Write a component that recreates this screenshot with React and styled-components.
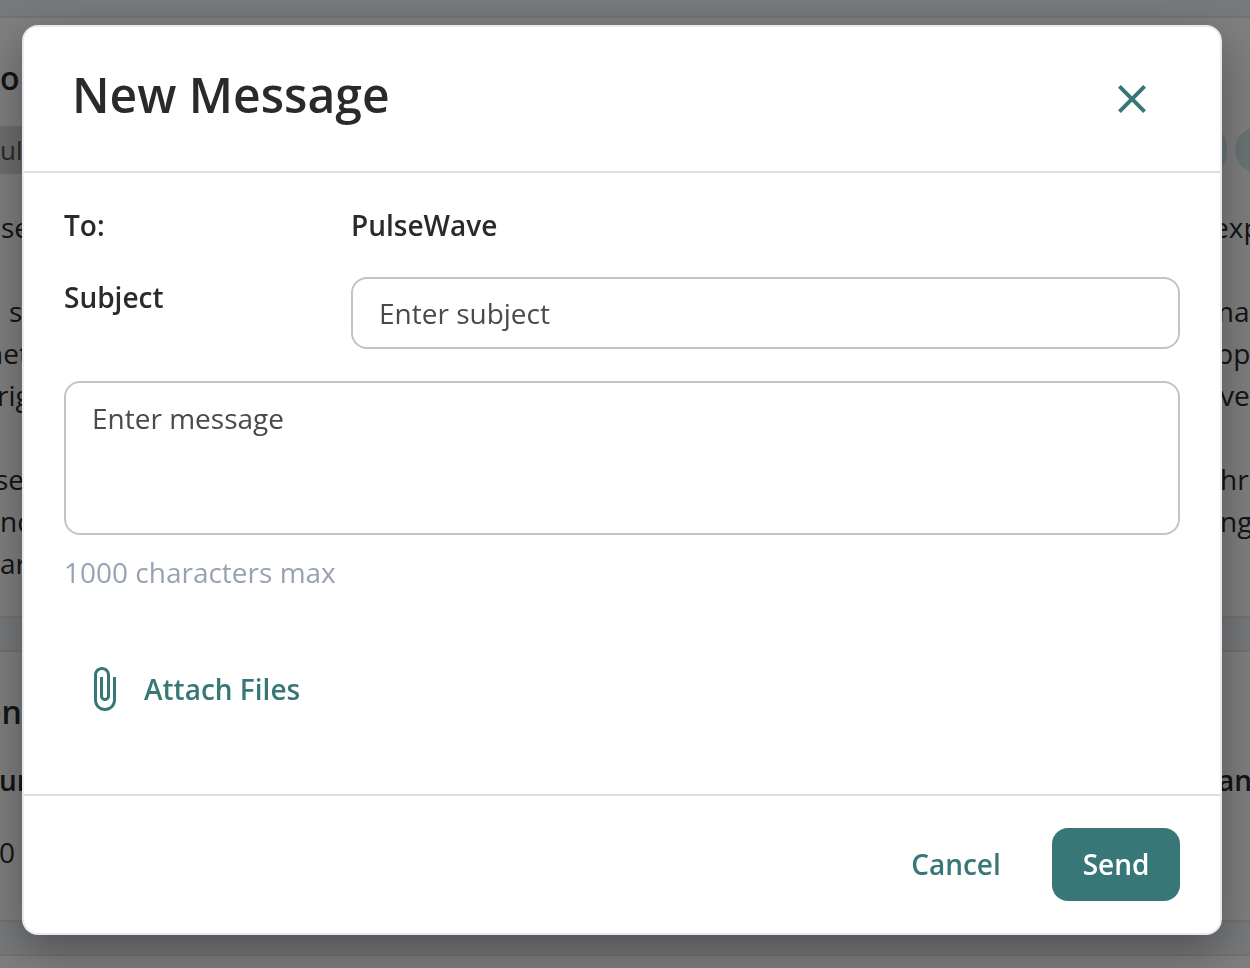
import styled, { createGlobalStyle } from 'styled-components';

const GlobalStyle = createGlobalStyle`
  * {
    box-sizing: border-box;
  }
  body {
    margin: 0;
    overflow: hidden;
    font-family: 'Open Sans', 'Noto Sans', sans-serif;
    font-size: 28px;
    color: #2a2a2a;
  }
`;

const Page = styled.div`
  width: 1250px;
  height: 968px;
  padding-top: 16px;
  overflow: hidden;
  background: #eff2f5;
`;

const Card = styled.section`
  height: ${(props) => props.$height}px;
  margin-bottom: ${(props) => props.$gap || 0}px;
  padding-top: ${(props) => props.$top || 0}px;
  border-top: 2px solid #e4e6e9;
  border-bottom: 2px solid #e4e6e9;
  background: #fff;
`;

const Row = styled.div`
  display: flex;
  justify-content: space-between;
  height: ${(props) => props.$height}px;
  margin-bottom: ${(props) => props.$gap || 0}px;
  line-height: ${(props) => props.$height}px;
  font-size: ${(props) => props.$size || 28}px;
  font-weight: ${(props) => props.$weight || 400};
  white-space: nowrap;
`;

const Cell = styled.span`
  width: 40px;
  text-indent: ${(props) => props.$shift || 0}px;
`;

const Tag = styled(Cell)`
  background: #dcdcdc;
  color: #555;
  font-size: 26px;
`;

const Pills = styled.div`
  display: flex;
  gap: 8px;
  width: 62px;
  padding-top: 1px;
`;

const Pill = styled.i`
  flex: none;
  width: ${(props) => props.$width}px;
  height: 46px;
  border-radius: 23px;
  background: #d6e9eb;
`;

const Overlay = styled.div`
  position: fixed;
  inset: 0;
  display: flex;
  align-items: flex-start;
  padding: 25px 28px 0 22px;
  background: rgba(0, 0, 0, 0.5);
`;

const Modal = styled.div`
  display: flex;
  flex-direction: column;
  width: 1200px;
  height: 910px;
  border: 2px solid #e9eaf0;
  border-radius: 16px;
  background: #fff;
  box-shadow: 0 16px 48px rgba(0, 0, 0, 0.35);
`;

const Header = styled.header`
  display: flex;
  justify-content: space-between;
  height: 146px;
  padding: 35px 64px 0 48px;
  border-bottom: 2px solid #dedede;
`;

const Title = styled.h1`
  margin: 0;
  font-size: 48px;
  font-weight: 600;
  line-height: 66px;
`;

const IconButton = styled.button`
  width: 48px;
  height: 48px;
  margin-top: 13px;
  padding: 0;
  border: 0;
  background: none;
  color: #387778;
`;

const Body = styled.div`
  flex: 1;
  padding: 31px 40px 0;
`;

const Field = styled.div`
  display: grid;
  grid-template-columns: 287px 1fr;
  margin-bottom: ${(props) => props.$gap}px;
  font-weight: 600;
  line-height: 42px;
`;

const Input = styled.input`
  height: 72px;
  margin-top: 1px;
  padding: 0 26px;
  border: 2px solid #c4c4c4;
  border-radius: 16px;
  outline: none;
  font: 400 28px 'Open Sans', sans-serif;

  &::placeholder {
    color: #4a4a4a;
  }
`;

const Textarea = styled.textarea`
  display: block;
  width: 100%;
  height: 154px;
  padding: 14px 26px;
  border: 2px solid #c4c4c4;
  border-radius: 16px;
  outline: none;
  resize: none;
  font: 400 28px/42px 'Open Sans', sans-serif;

  &::placeholder {
    color: #4a4a4a;
  }
`;

const Hint = styled.p`
  margin: 16px 0 0;
  color: #98a2b3;
  line-height: 42px;
`;

const Attach = styled.button`
  display: flex;
  align-items: center;
  gap: 16px;
  margin: 72px 0 0 16px;
  padding: 0;
  border: 0;
  background: none;
  color: #387778;
  font: 600 28px/48px 'Open Sans', sans-serif;
`;

const Footer = styled.footer`
  display: flex;
  justify-content: flex-end;
  align-items: flex-start;
  gap: 20px;
  height: 139px;
  padding: 32px 40px 0;
  border-top: 2px solid #dedede;
`;

const Button = styled.button`
  height: 73px;
  width: ${(props) => (props.$primary ? 128 : 152)}px;
  padding: 0 0 1px;
  border: 0;
  border-radius: 16px;
  background: ${(props) => (props.$primary ? '#387778' : 'transparent')};
  color: ${(props) => (props.$primary ? '#fff' : '#387778')};
  font: 600 28px 'Open Sans', sans-serif;
`;

const lines = [
  ['se', 1, 'exp', 3],
  [],
  ['s', 9, 'ma', -2],
  ['net', -14, 'pp', 6],
  ['rig', -3, 've', 10],
  [],
  ['se', -5, 'thr', 0],
  ['nd', 0, 'ng', 10],
  ['ar', 0],
];

function CloseIcon() {
  return (
    <svg width="48" height="48" viewBox="0 0 24 24" fill="currentColor">
      <path d="M19 6.41L17.59 5 12 10.59 6.41 5 5 6.41 10.59 12 5 17.59 6.41 19 12 13.41 17.59 19 19 17.59 13.41 12z" />
    </svg>
  );
}

function ClipIcon() {
  return (
    <svg width="48" height="48" viewBox="0 0 24 24" fill="currentColor">
      <path d="M16.5 6v11.5c0 2.21-1.79 4-4 4s-4-1.79-4-4V5c0-1.38 1.12-2.5 2.5-2.5s2.5 1.12 2.5 2.5v10.5c0 .55-.45 1-1 1s-1-.45-1-1V6H10v9.5c0 1.38 1.12 2.5 2.5 2.5s2.5-1.12 2.5-2.5V5c0-2.21-1.79-4-4-4S7 2.79 7 5v12.5c0 3.04 2.46 5.5 5.5 5.5s5.5-2.46 5.5-5.5V6h-1.5z" />
    </svg>
  );
}

function Background() {
  return (
    <Page>
      <Card $height={602} $gap={32} $top={36}>
        <Row $height={48} $gap={24} $size={32} $weight={600}>
          <Cell>o</Cell>
        </Row>
        <Row $height={48} $gap={32}>
          <Tag>ul</Tag>
          <Pills>
            <Pill $width={39} />
            <Pill $width={120} />
          </Pills>
        </Row>
        {lines.map(([left, leftShift, right, rightShift], i) => (
          <Row key={i} $height={42}>
            <Cell $shift={leftShift}>{left}</Cell>
            <Cell $shift={rightShift}>{right}</Cell>
          </Row>
        ))}
      </Card>
      <Card $height={272} $gap={32} $top={36}>
        <Row $height={48} $gap={23} $size={32} $weight={600}>
          <Cell $shift={-17}>en</Cell>
        </Row>
        <Row $height={42} $gap={30} $weight={600}>
          <Cell $shift={-1}>ur</Cell>
          <Cell $shift={8}>an</Cell>
        </Row>
        <Row $height={42}>
          <Cell $shift={-1}>0</Cell>
        </Row>
      </Card>
      <Card $height={100} />
    </Page>
  );
}

export default function App() {
  return (
    <>
      <GlobalStyle />
      <Background />
      <Overlay>
        <Modal role="dialog" aria-label="New Message">
          <Header>
            <Title>New Message</Title>
            <IconButton aria-label="Close">
              <CloseIcon />
            </IconButton>
          </Header>
          <Body>
            <Field $gap={30}>
              <span>To:</span>
              <span>PulseWave</span>
            </Field>
            <Field $gap={32}>
              <label htmlFor="subject">Subject</label>
              <Input id="subject" placeholder="Enter subject" />
            </Field>
            <Textarea placeholder="Enter message" />
            <Hint>1000 characters max</Hint>
            <Attach>
              <ClipIcon />
              Attach Files
            </Attach>
          </Body>
          <Footer>
            <Button>Cancel</Button>
            <Button $primary>Send</Button>
          </Footer>
        </Modal>
      </Overlay>
    </>
  );
}
